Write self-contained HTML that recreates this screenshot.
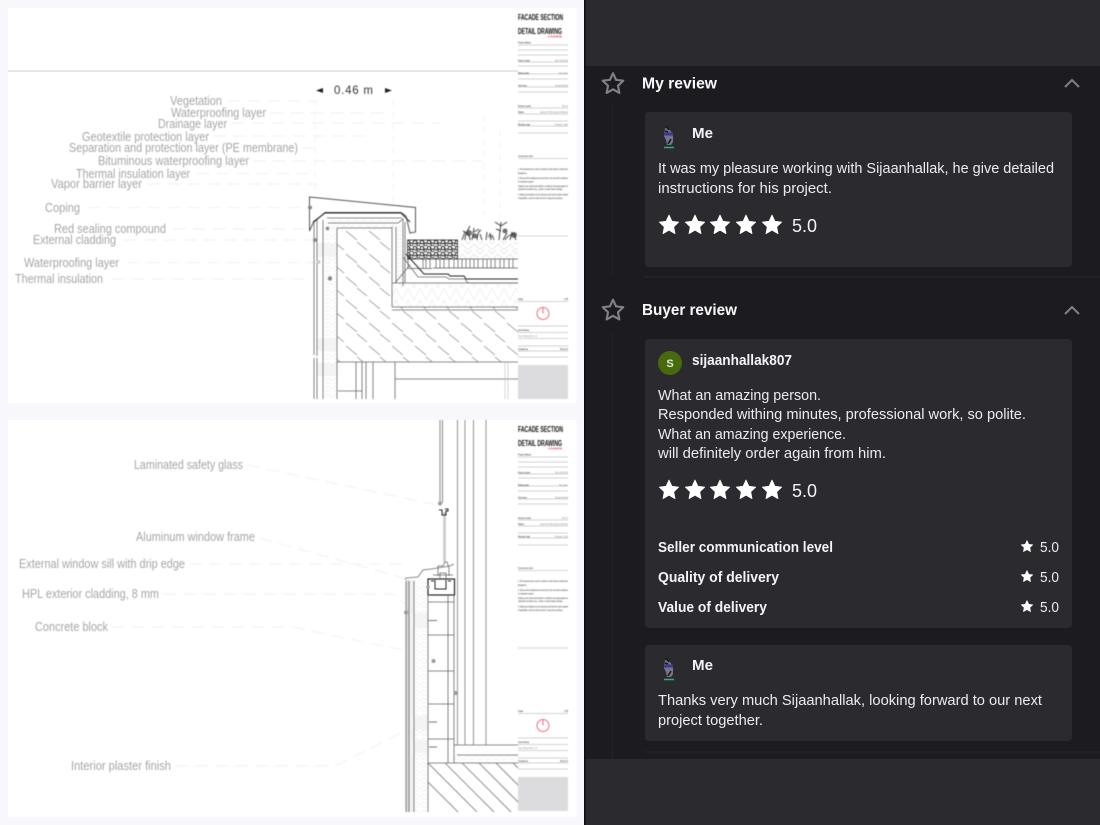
<!DOCTYPE html>
<html lang="en"><head><meta charset="utf-8"><title>Reviews</title>
<style>
html,body{margin:0;padding:0;width:1100px;height:825px;overflow:hidden;background:#1c1c20}
svg{display:block;position:absolute;left:0;top:0}
text{font-family:"Liberation Sans",sans-serif}
.left{filter:blur(.55px)}
.right{filter:blur(.3px)}
.lb{fill:#a5a5a9;font-size:12.5px}
.d{stroke:#f1f1f1;stroke-width:1;stroke-dasharray:13 7;fill:none}
.t{fill:#ececee;font-size:14.5px}
.b{fill:#f4f4f6;font-size:14.5px;font-weight:700}
.h{fill:#f8f8fa;font-size:16px;font-weight:700}
.tb{fill:#222;font-size:2.8px}
.tg{fill:#888;font-size:2.6px}
.tt{fill:#111;font-size:8px;font-weight:700}
.r{fill:#e8243e;font-size:3px;font-weight:700}
.l{stroke:#666;stroke-width:.8;fill:none}
.k{stroke:#222;stroke-width:1;fill:none}
.g{stroke:#c4c4c4;stroke-width:.7;fill:none}
</style></head><body>
<svg width="1100" height="825" viewBox="0 0 1100 825" xmlns="http://www.w3.org/2000/svg">
<defs>
<pattern id="con" width="23" height="23" patternUnits="userSpaceOnUse"><path d="M1 1l11 9M12 12l10 8" stroke="#888" stroke-width=".8" fill="none"/></pattern>
<pattern id="wav" width="8" height="8" patternUnits="userSpaceOnUse"><path d="M0 2l4 3 4-3M0 6l4 3 4-3" stroke="#e8e8e8" stroke-width=".6" fill="none"/></pattern>
<pattern id="ins" width="12" height="12" patternUnits="userSpaceOnUse"><path d="M0 0l6 12 6-12" stroke="#e4e4e4" stroke-width=".6" fill="none"/></pattern>
<pattern id="grav" width="7" height="6" patternUnits="userSpaceOnUse"><rect width="7" height="6" fill="#fff"/><circle cx="2" cy="2" r="1.800" fill="none" stroke="#111" stroke-width="1"/><circle cx="5.500" cy="4.500" r="1.500" fill="none" stroke="#222" stroke-width="1"/></pattern>
<pattern id="soil" width="12" height="10" patternUnits="userSpaceOnUse"><path d="M0 10l6-6M6 4l6 6M0 4l4-4M8 0l4 4" stroke="#d8d8d8" stroke-width=".6" fill="none"/></pattern>
<path id="st" d="M0-10l2.900 6.300 6.800.8-5 4.700 1.300 6.800L0 5.200-6 8.600l1.300-6.800-5-4.700 6.800-.8z" stroke-linejoin="round"/>
<g id="tblock">
<text x="518" y="20" class="tt" textLength="45" lengthAdjust="spacingAndGlyphs">FACADE SECTION</text>
<text x="518" y="34" class="tt" textLength="44" lengthAdjust="spacingAndGlyphs">DETAIL DRAWING</text>
<text x="548" y="37.500" class="r" textLength="14" lengthAdjust="spacingAndGlyphs">A1 PLAN NR 003</text>
<text x="518" y="43.500" class="tb" textLength="13" lengthAdjust="spacingAndGlyphs">Project address</text>
<path class="g" d="M518 45h50M518 50h50M518 55h50M518 62h50M518 66h50M518 74h50M518 79h50M518 87h50M518 92h50M518 108h50M518 114h50M518 121h50M518 126h50M518 133h50"/>
<text x="518" y="61.500" class="tb" textLength="12" lengthAdjust="spacingAndGlyphs">Project number</text><text x="555" y="61.500" class="tg" textLength="13" lengthAdjust="spacingAndGlyphs">SD-1-00-0732</text>
<text x="518" y="74" class="tb" textLength="11" lengthAdjust="spacingAndGlyphs">Building phase</text><text x="559" y="74" class="tg" textLength="9" lengthAdjust="spacingAndGlyphs">Renovation</text>
<text x="518" y="86.500" class="tb" textLength="9" lengthAdjust="spacingAndGlyphs">Client name</text><text x="555" y="86.500" class="tg" textLength="13" lengthAdjust="spacingAndGlyphs">General Build</text>
<text x="518" y="107" class="tb" textLength="13" lengthAdjust="spacingAndGlyphs">Revision number</text><text x="562" y="107" class="tg" textLength="6" lengthAdjust="spacingAndGlyphs">Rev 01</text>
<text x="518" y="113" class="tb" textLength="6" lengthAdjust="spacingAndGlyphs">Status</text><text x="540" y="113" class="tg" textLength="28" lengthAdjust="spacingAndGlyphs">Issued for Planning and Review</text>
<text x="518" y="125.500" class="tb" textLength="12" lengthAdjust="spacingAndGlyphs">Revision date</text><text x="555" y="125.500" class="tg" textLength="13" lengthAdjust="spacingAndGlyphs">February 2, 2024</text>
<text x="518" y="157" class="tb" textLength="15" lengthAdjust="spacingAndGlyphs">Construction notes</text>
<path class="g" d="M518 158.500h50"/>
<g fill="#333" font-size="2.800">
<text x="518" y="170" textLength="50" lengthAdjust="spacingAndGlyphs">1. All measurements must be verified on site before construction</text>
<text x="518" y="174">begins.</text>
<text x="518" y="179" textLength="50" lengthAdjust="spacingAndGlyphs">2. Ensure all foundations are kept level, dry and well conditions</text>
<text x="518" y="182.500" textLength="16" lengthAdjust="spacingAndGlyphs">for adequate support.</text>
<text x="518" y="187" textLength="50" lengthAdjust="spacingAndGlyphs">Sealing must meet local weather conditions and appropriate for</text>
<text x="518" y="190" textLength="45" lengthAdjust="spacingAndGlyphs">maintained conditions (e.g., exterior or water-based coatings).</text>
<text x="518" y="195.500" textLength="50" lengthAdjust="spacingAndGlyphs">3. Waterproof details must be planning work with the right material</text>
<text x="518" y="199" textLength="45" lengthAdjust="spacingAndGlyphs">if applicable, such as solar panels or supporting clamps.</text>
</g>
<path class="g" d="M518 236h50"/>
<text x="518" y="300" class="tb" textLength="5" lengthAdjust="spacingAndGlyphs">Scale</text><text x="564" y="300" class="tb" textLength="4" lengthAdjust="spacingAndGlyphs">1:50</text>
<path class="g" d="M518 301.500h50M518 326h50M518 332.500h50M518 338.500h50M518 346h50M518 351h50M518 357h50"/>
<circle cx="543" cy="313.500" r="6" fill="none" stroke="#ef6a80" stroke-width="1"/><path d="M543 307v6.500" stroke="#ef6a80" stroke-width="1"/>
<text x="518" y="331" class="tb" textLength="11" lengthAdjust="spacingAndGlyphs">Service Drawing</text>
<text x="518" y="337" class="tg" textLength="19" lengthAdjust="spacingAndGlyphs">Your Street Rd, 1-6</text>
<text x="518" y="350" class="tb" textLength="10" lengthAdjust="spacingAndGlyphs">Created by</text><text x="560" y="350" class="tb" textLength="8" lengthAdjust="spacingAndGlyphs">Sheet 1/2</text>
<rect x="518" y="365" width="50" height="34" fill="#dcdbde"/>
</g>
</defs>

<rect width="584" height="825" fill="#f8f7fb"/>
<rect x="8" y="8" width="568.500" height="395" fill="#fff"/>
<rect x="8" y="420" width="568.500" height="397" fill="#fff"/>

<g class="left">
<path d="M8 71h510" stroke="#c8c8cb" stroke-width="1"/>

<!-- page 1 leader lines -->
<path class="d" d="M228 101h90M270 113h120M231 123h210M213 136h160M302 148h20M253 161h230M197 173.500h120M148 184h170M87 207.500h225M173 229h140M124 240h190M127 262.500h190M111 279h200"/>
<path d="M315 100v120M393 100v130M484 115v100M500 130v90" stroke="#f3f3f3" stroke-dasharray="6 6" fill="none"/>

<g class="lb">
<text x="170" y="105" textLength="52" lengthAdjust="spacingAndGlyphs">Vegetation</text>
<text x="171" y="117" textLength="95" lengthAdjust="spacingAndGlyphs">Waterproofing layer</text>
<text x="158" y="128" textLength="69" lengthAdjust="spacingAndGlyphs">Drainage layer</text>
<text x="82" y="141" textLength="127" lengthAdjust="spacingAndGlyphs">Geotextile protection layer</text>
<text x="69" y="152" textLength="229" lengthAdjust="spacingAndGlyphs">Separation and protection layer (PE membrane)</text>
<text x="98" y="165" textLength="151" lengthAdjust="spacingAndGlyphs">Bituminous waterproofing layer</text>
<text x="76" y="178" textLength="114" lengthAdjust="spacingAndGlyphs">Thermal insulation layer</text>
<text x="51" y="188" textLength="91" lengthAdjust="spacingAndGlyphs">Vapor barrier layer</text>
<text x="45" y="212" textLength="35" lengthAdjust="spacingAndGlyphs">Coping</text>
<text x="54" y="233" textLength="112" lengthAdjust="spacingAndGlyphs">Red sealing compound</text>
<text x="33" y="244" textLength="83" lengthAdjust="spacingAndGlyphs">External cladding</text>
<text x="24" y="267" textLength="95" lengthAdjust="spacingAndGlyphs">Waterproofing layer</text>
<text x="15" y="283" textLength="88" lengthAdjust="spacingAndGlyphs">Thermal insulation</text>
</g>

<text x="334" y="94" font-size="11.500" fill="#333" textLength="39">0.46 m</text>
<path d="M316 90.500l7-2.500v5zM392 90.500l-7-2.500v5z" fill="#222"/>

<!-- page 1 section -->
<rect x="337" y="228" width="55" height="80" fill="url(#con)"/>
<rect x="337" y="307" width="181" height="55" fill="url(#con)"/>
<rect x="324" y="225" width="13" height="173" fill="url(#wav)"/>
<rect x="392" y="284" width="126" height="23" fill="url(#ins)"/>
<rect x="396" y="227" width="9" height="56" fill="url(#wav)"/>
<rect x="327" y="220" width="74" height="8" fill="url(#wav)"/>
<rect x="317" y="243" width="20" height="14" fill="#f4f4f5"/>
<rect x="317" y="338" width="20" height="13" fill="#f4f4f5"/>
<rect x="317" y="363" width="20" height="13" fill="#f4f4f5"/>
<path d="M309.500 197L415.500 207.500V232L410 233 406 216 401 212.500H325L313 223 309.500 231z" fill="#fff" stroke="#555" stroke-width="1"/>
<path class="k" d="M313 222l12-9h76l9 9"/>
<path class="l" d="M327 218h75M328 223h70l5-4v67M337 228h55v3M392 227v56M396 227v56M405 222v61"/>
<path class="l" d="M314 222V355M317 220V356M323 220V399M337 228V399M314 358V399M317 358V399"/>
<path class="l" d="M392 283V307M392 307H518M392 310H518M392 283H518M337 362H518M395 379H518M395 362V399M356 362V399M362 362V399M366 362V399M373 362V399M338 391H362"/>
<path class="g" d="M505 362V399M508 362V399"/>
<rect x="407.500" y="240" width="50" height="19" fill="url(#grav)" stroke="#111" stroke-width=".7"/>
<rect x="458" y="241" width="60" height="17" fill="url(#soil)"/>
<path d="M407 259h111M408 268.500h24M433 268h85M408 259v9M423 259v9M426 259v9M430 259v9M436 259v9M440 259v9M444 259v9M449 259v9M454 259v9M458 259v9M462 259v9M466 259v9M470 259v9M474 259v9M478 259v9M483 259v9M487 259v9M491 259v9M495 259v9M500 259v9M504 259v9M509 259v9M513 259v9" stroke="#555" stroke-width=".7" fill="none"/>
<path class="k" d="M406 254l18 20h24l2 2h14l2 3h52"/>
<path class="l" d="M403 257l15 20h28l3 2h16l2 3 2 1h49M395 283l15-18"/>
<path d="M462 240l3-8M465 240c0-6 3-10 5-14M470 240c0-5-4-8-7-9M472 240l2-12M474 232l5-3M477 240c1-4 0-8 4-10M482 240l-2-6M486 240l1-8M491 240l-1-7M494 240l-2-5M499 240l2-18M501 226l-6-4M501 226l6-4M501 231l-5-2M503 240l4-7M505 240c2-4 6-6 10-6M510 240l2-8M516 240l-2-6" stroke="#444" stroke-width="1" fill="none"/>
<circle cx="469" cy="233" r="3" fill="#333" opacity=".7"/><circle cx="475" cy="236" r="2.500" fill="#333" opacity=".7"/><circle cx="505" cy="231" r="2.500" fill="#333" opacity=".7"/><circle cx="514" cy="235" r="3" fill="#333" opacity=".7"/><circle cx="490" cy="236" r="2" fill="#666" opacity=".6"/>
<g fill="#888"><circle cx="310" cy="207.500" r="2"/><circle cx="327.500" cy="228.500" r="1.700"/><circle cx="315" cy="240" r="2"/><circle cx="330" cy="278.500" r="2.200"/></g>
<circle cx="318.500" cy="262" r="2" fill="#ccc"/>

<use href="#tblock"/>

<!-- page 2 leader lines -->
<g stroke="#f1f1f1" stroke-dasharray="13 7" fill="none"><path d="M247 465l190 40M259 538l145 40M189 564h215M163 594h230l15 12M112 627h180l120 25M175 766h160l70-35"/></g>
<g class="lb">
<text x="134" y="469" textLength="109" lengthAdjust="spacingAndGlyphs">Laminated safety glass</text>
<text x="136" y="541" textLength="119" lengthAdjust="spacingAndGlyphs">Aluminum window frame</text>
<text x="19" y="568" textLength="166" lengthAdjust="spacingAndGlyphs">External window sill with drip edge</text>
<text x="22" y="598" textLength="137" lengthAdjust="spacingAndGlyphs">HPL exterior cladding, 8 mm</text>
<text x="35" y="631" textLength="73" lengthAdjust="spacingAndGlyphs">Concrete block</text>
<text x="71" y="770" textLength="100" lengthAdjust="spacingAndGlyphs">Interior plaster finish</text>
</g>

<!-- page 2 section -->
<rect x="414" y="580" width="14" height="232" fill="url(#wav)"/>
<rect x="406" y="580" width="3" height="232" fill="#dcdcde"/>
<rect x="409" y="580" width="5" height="232" fill="#f0f0f1"/>
<rect x="410" y="613" width="18" height="15" fill="#f4f4f5"/>
<rect x="410" y="716" width="18" height="14" fill="#f4f4f5"/>
<rect x="410" y="740" width="18" height="13" fill="#f4f4f5"/>
<rect x="454" y="755" width="64" height="8" fill="url(#wav)"/>
<clipPath id="c2"><rect x="428" y="763" width="90" height="49"/></clipPath>
<g clip-path="url(#c2)"><path d="M428 763l50 50M445 763l50 50M462 763l50 50M479 763l50 50M496 763l50 50M513 763l50 50M428 782l31 31" stroke="#777" stroke-width=".8"/></g>
<path d="M440 420V503M442.500 420V503" stroke="#888" stroke-width="1" fill="none"/>
<path d="M444.500 512v50" stroke="#c8c8c8" stroke-width="2.500"/>
<path d="M457.500 420V745M465 420V745M473.500 420V745M486 420V745" stroke="#888" stroke-width=".9" fill="none"/>
<path class="k" d="M439 510h3v5h4v-4h2v-2h-3M442 515v-3"/>
<path class="l" d="M454 745H518M457 755H518M428 763H518M454 595V763"/>
<path d="M405 580l1-2 12-1 5-7 8-1 19-3 4-2" fill="#fff" stroke="#666" stroke-width=".8"/>
<rect x="428" y="579" width="26.500" height="16" fill="#fff" stroke="#111" stroke-width="1.100"/>
<path class="k" d="M435 580v9h11v-9M431 581h3M448 581h3M428 595h3M452 595h3"/>
<path class="l" d="M438 576v-10h5l2-4h2l2 6v8M440 578v-5h6v5M433 575h20"/>
<path class="l" d="M406 581V812M409 581V812M414 581V812M428 595V812M448 595V763M428 602h26M428 635h26M428 671h26M428 704h26M428 739h26"/>
<g fill="#999"><circle cx="440" cy="503.500" r="2"/><circle cx="406" cy="612.500" r="2"/><circle cx="433.500" cy="661" r="2"/><circle cx="455.500" cy="693" r="2"/><circle cx="428" cy="587" r="1.700"/></g>
<path d="M428 620.500h9M429 722h8M429 747h8" stroke="#777" stroke-width="1"/>

<use href="#tblock" y="412"/>
</g>

<!-- right panel -->
<rect x="584" width="516" height="825" fill="#1c1c20"/>
<rect x="584" width="1.500" height="825" fill="#0d0d0f"/>
<rect x="585.500" width="514.500" height="66" fill="#2a2a2f"/>
<rect x="585.500" y="759" width="514.500" height="66" fill="#2a2a2f"/>
<g class="right">
<path d="M612.500 105V276M612.500 332V759" stroke="#232327" stroke-width="1"/>
<path d="M645 277H1100M645 752H1100" stroke="#26262b" stroke-width="1"/>

<use href="#st" transform="translate(613 83.800) scale(1.060)" fill="none" stroke="#808085" stroke-width="2"/>
<text x="642" y="88.500" class="h" textLength="75" lengthAdjust="spacingAndGlyphs">My review</text>
<path d="M1065 87l7-7 7 7" fill="none" stroke="#808085" stroke-width="2"/>
<rect x="645" y="112" width="427" height="155" rx="4" fill="#2a2a2f"/>
<g id="av"><path d="M665 128l4 1 4 5v8l-2 3h-4l-1-5-2-4z" fill="#77748a"/><path d="M664 134h9" stroke="#3a3a90" stroke-width="3"/><path d="M666 126l3 4M671 139l-3 5M665 131l3 1" stroke="#1a1a1a" stroke-width="1.600"/><path d="M664 147.500h10" stroke="#2fae7a" stroke-width="1.500"/></g>
<text x="692" y="138" class="b" textLength="21" lengthAdjust="spacingAndGlyphs">Me</text>
<text x="658" y="173" class="t" textLength="396" lengthAdjust="spacingAndGlyphs">It was my pleasure working with Sijaanhallak, he give detailed</text>
<text x="658" y="193" class="t" textLength="174" lengthAdjust="spacingAndGlyphs">instructions for his project.</text>
<g fill="#fff" stroke="#fff" stroke-width=".8"><use href="#st" x="669" y="225"/><use href="#st" x="695" y="225"/><use href="#st" x="720" y="225"/><use href="#st" x="746" y="225"/><use href="#st" x="772" y="225"/></g>
<text x="792" y="232" fill="#f4f4f6" font-size="18" textLength="25" lengthAdjust="spacingAndGlyphs">5.0</text>

<use href="#st" transform="translate(613 310.300) scale(1.060)" fill="none" stroke="#808085" stroke-width="2"/>
<text x="642" y="315" class="h" textLength="95" lengthAdjust="spacingAndGlyphs">Buyer review</text>
<path d="M1065 314l7-7 7 7" fill="none" stroke="#808085" stroke-width="2"/>
<rect x="645" y="339" width="427" height="289" rx="4" fill="#2a2a2f"/>
<circle cx="670" cy="363" r="12" fill="#476a0e"/>
<text x="670" y="367" fill="#dfe8cf" font-size="11" font-weight="700" text-anchor="middle">S</text>
<text x="692" y="365" class="b" textLength="100" lengthAdjust="spacingAndGlyphs">sijaanhallak807</text>
<text x="658" y="400" class="t" textLength="163" lengthAdjust="spacingAndGlyphs">What an amazing person.</text>
<text x="658" y="419" class="t" textLength="368" lengthAdjust="spacingAndGlyphs">Responded withing minutes, professional work, so polite.</text>
<text x="658" y="439" class="t" textLength="188" lengthAdjust="spacingAndGlyphs">What an amazing experience.</text>
<text x="658" y="458" class="t" textLength="228" lengthAdjust="spacingAndGlyphs">will definitely order again from him.</text>
<g fill="#fff" stroke="#fff" stroke-width=".8"><use href="#st" x="669" y="490"/><use href="#st" x="695" y="490"/><use href="#st" x="720" y="490"/><use href="#st" x="746" y="490"/><use href="#st" x="772" y="490"/></g>
<text x="792" y="497" fill="#f4f4f6" font-size="18" textLength="25" lengthAdjust="spacingAndGlyphs">5.0</text>
<text x="658" y="552" class="b" textLength="175" lengthAdjust="spacingAndGlyphs">Seller communication level</text>
<text x="658" y="582" class="b" textLength="121" lengthAdjust="spacingAndGlyphs">Quality of delivery</text>
<text x="658" y="612" class="b" textLength="109" lengthAdjust="spacingAndGlyphs">Value of delivery</text>
<g fill="#fff" stroke="#fff" stroke-width="1"><use href="#st" transform="translate(1027 546.500) scale(.6)"/><use href="#st" transform="translate(1027 576.500) scale(.6)"/><use href="#st" transform="translate(1027 606.500) scale(.6)"/></g>
<g fill="#ececee" font-size="14.500"><text x="1040" y="552" textLength="19" lengthAdjust="spacingAndGlyphs">5.0</text><text x="1040" y="582" textLength="19" lengthAdjust="spacingAndGlyphs">5.0</text><text x="1040" y="612" textLength="19" lengthAdjust="spacingAndGlyphs">5.0</text></g>

<rect x="645" y="645" width="427" height="96" rx="4" fill="#2a2a2f"/>
<use href="#av" y="532"/>
<text x="692" y="670" class="b" textLength="21" lengthAdjust="spacingAndGlyphs">Me</text>
<text x="658" y="705" class="t" textLength="384" lengthAdjust="spacingAndGlyphs">Thanks very much Sijaanhallak, looking forward to our next</text>
<text x="658" y="725" class="t" textLength="105" lengthAdjust="spacingAndGlyphs">project together.</text>
</g>
</svg>
</body></html>
